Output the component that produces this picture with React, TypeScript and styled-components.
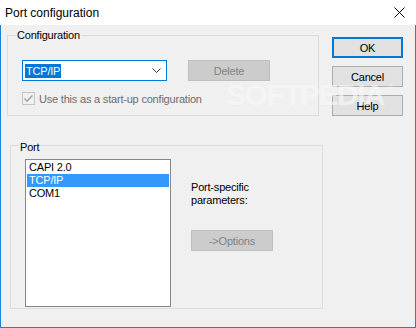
import { FC } from 'react';
import styled, { createGlobalStyle } from 'styled-components';

const ACCENT = '#1883d7';
const FACE = '#f0f0f0';

const GlobalStyle = createGlobalStyle`
  html, body {
    margin: 0;
    padding: 0;
    background: ${FACE};
  }
  body {
    font-family: "Liberation Sans", Arial, sans-serif;
  }
`;

const Window = styled.div`
  position: relative;
  width: 416px;
  height: 328px;
  display: flex;
  flex-direction: column;
  background: ${FACE};
  color: #000;
  overflow: hidden;
`;

const TitleBar = styled.div`
  height: 25px;
  flex: none;
  background: #fff;
  display: flex;
  align-items: center;
  justify-content: space-between;
  padding: 0 11px 0 5px;
  font-size: 12px;
`;

const Title = styled.span`
  line-height: 25px;
  padding-top: 1px;
`;

const Body = styled.div`
  flex: 1;
  display: flex;
  border: 1px solid ${ACCENT};
  border-top: none;
  font-size: 11px;
  letter-spacing: -0.2px;
`;

const LeftCol = styled.div`
  display: flex;
  flex-direction: column;
  align-items: flex-start;
  padding: 10px 0 0 6px;
`;

const RightCol = styled.div`
  display: flex;
  flex-direction: column;
  gap: 8px;
  padding: 12px 0 0 9px;
`;

const GroupBox = styled.div<{ $w: number; $h: number; $offset?: number }>`
  position: relative;
  box-sizing: border-box;
  width: ${(p) => p.$w}px;
  height: ${(p) => p.$h}px;
  margin: ${(p) => p.$offset ?? 0}px 0 0 ${(p) => (p.$offset ? 3 : 0)}px;
  border: 1px solid #dcdcdc;
`;

const Caption = styled.span<{ $top: number }>`
  position: absolute;
  left: 8px;
  top: ${(p) => p.$top}px;
  padding: 0 1px;
  line-height: 13px;
  background: ${FACE};
`;

const ConfigInner = styled.div`
  display: flex;
  flex-direction: column;
  padding: 24px 0 0 14px;
`;

const Row = styled.div`
  display: flex;
  align-items: center;
  gap: 21px;
`;

const Combo = styled.div`
  box-sizing: border-box;
  width: 145px;
  height: 21px;
  display: flex;
  align-items: center;
  justify-content: space-between;
  padding: 0 5px 0 2px;
  background: #fff;
  border: 1px solid #0078d7;
`;

const Selected = styled.span`
  background: #0078d7;
  color: #fff;
  line-height: 14px;
  padding: 0 1px;
`;

const Button = styled.div<{ $w?: number; $default?: boolean; $disabled?: boolean }>`
  box-sizing: border-box;
  width: ${(p) => p.$w ?? 71}px;
  height: 21px;
  display: flex;
  align-items: center;
  justify-content: center;
  background: ${(p) => (p.$disabled ? '#cccccc' : '#e1e1e1')};
  border: ${(p) =>
    p.$default ? '2px solid #0078d7' : p.$disabled ? '1px solid #bfbfbf' : '1px solid #adadad'};
  color: ${(p) => (p.$disabled ? '#838383' : '#000')};
  font-size: 11px;
`;

const CheckRow = styled.div`
  display: flex;
  align-items: center;
  margin-top: 11px;
  gap: 4px;
  color: #6d6d6d;
`;

const CheckBox = styled.div`
  box-sizing: border-box;
  width: 13px;
  height: 13px;
  border: 1px solid #c4c4c4;
  background: ${FACE};
  display: flex;
  align-items: center;
  justify-content: center;
`;

const PortInner = styled.div`
  display: flex;
  padding: 13px 0 0 14px;
`;

const ListBox = styled.div`
  box-sizing: border-box;
  width: 146px;
  height: 148px;
  padding-top: 1px;
  background: #fff;
  border: 1px solid #828790;
`;

const ListItem = styled.div<{ $selected?: boolean }>`
  height: 13px;
  line-height: 13px;
  margin: 0 1px;
  padding-left: 2px;
  background: ${(p) => (p.$selected ? '#3399ff' : 'transparent')};
  color: ${(p) => (p.$selected ? '#fff' : '#000')};
`;

const Params = styled.div`
  display: flex;
  flex-direction: column;
  align-items: flex-start;
  margin-left: 20px;
  padding-top: 22px;
`;

const ParamsText = styled.div`
  line-height: 13px;
  margin-bottom: 23px;
`;

// faint site watermark laid over the dialog
const Watermark = styled.div`
  position: absolute;
  left: 226px;
  top: 70px;
  font-family: "Liberation Sans", Arial, sans-serif;
  font-weight: bold;
  font-size: 30px;
  letter-spacing: -1.5px;
  line-height: 36px;
  color: rgba(255, 255, 255, 0.6);
  text-shadow: 0 0 1px rgba(0, 0, 0, 0.04);
  pointer-events: none;

  sup {
    font-size: 9px;
    vertical-align: 14px;
    margin-left: 3px;
  }
`;

const CloseIcon = () => (
  <svg width="11" height="11" viewBox="0 0 11 11">
    <path d="M0.5 0.5 L10.5 10.5 M10.5 0.5 L0.5 10.5" stroke="#000" strokeWidth="1" />
  </svg>
);

const Chevron = () => (
  <svg width="9" height="5" viewBox="0 0 9 5">
    <path d="M0.5 0.5 L4.5 4.5 L8.5 0.5" stroke="#333" strokeWidth="1" fill="none" />
  </svg>
);

const CheckMark = () => (
  <svg width="11" height="11" viewBox="0 0 11 11">
    <path d="M1.5 5.5 L4 8 L9.5 2.5" stroke="#a8a8a8" strokeWidth="1.6" fill="none" />
  </svg>
);

const ports = ['CAPI 2.0', 'TCP/IP', 'COM1'];

const App: FC = () => (
  <>
    <GlobalStyle />
    <Window>
      <TitleBar>
        <Title>Port configuration</Title>
        <CloseIcon />
      </TitleBar>
      <Body>
        <LeftCol>
          <GroupBox $w={312} $h={81}>
            <Caption $top={-7}>Configuration</Caption>
            <ConfigInner>
              <Row>
                <Combo>
                  <Selected>TCP/IP</Selected>
                  <Chevron />
                </Combo>
                <Button $w={82} $disabled>
                  Delete
                </Button>
              </Row>
              <CheckRow>
                <CheckBox>
                  <CheckMark />
                </CheckBox>
                Use this as a start-up configuration
              </CheckRow>
            </ConfigInner>
          </GroupBox>
          <GroupBox $w={313} $h={164} $offset={29}>
            <Caption $top={-5}>Port</Caption>
            <PortInner>
              <ListBox>
                {ports.map((p) => (
                  <ListItem key={p} $selected={p === 'TCP/IP'}>
                    {p}
                  </ListItem>
                ))}
              </ListBox>
              <Params>
                <ParamsText>
                  Port-specific
                  <br />
                  parameters:
                </ParamsText>
                <Button $w={82} $disabled>
                  -&gt;Options
                </Button>
              </Params>
            </PortInner>
          </GroupBox>
        </LeftCol>
        <RightCol>
          <Button $default>OK</Button>
          <Button>Cancel</Button>
          <Button>Help</Button>
        </RightCol>
      </Body>
      <Watermark>
        SOFTPEDIA<sup>®</sup>
      </Watermark>
    </Window>
  </>
);

export default App;
